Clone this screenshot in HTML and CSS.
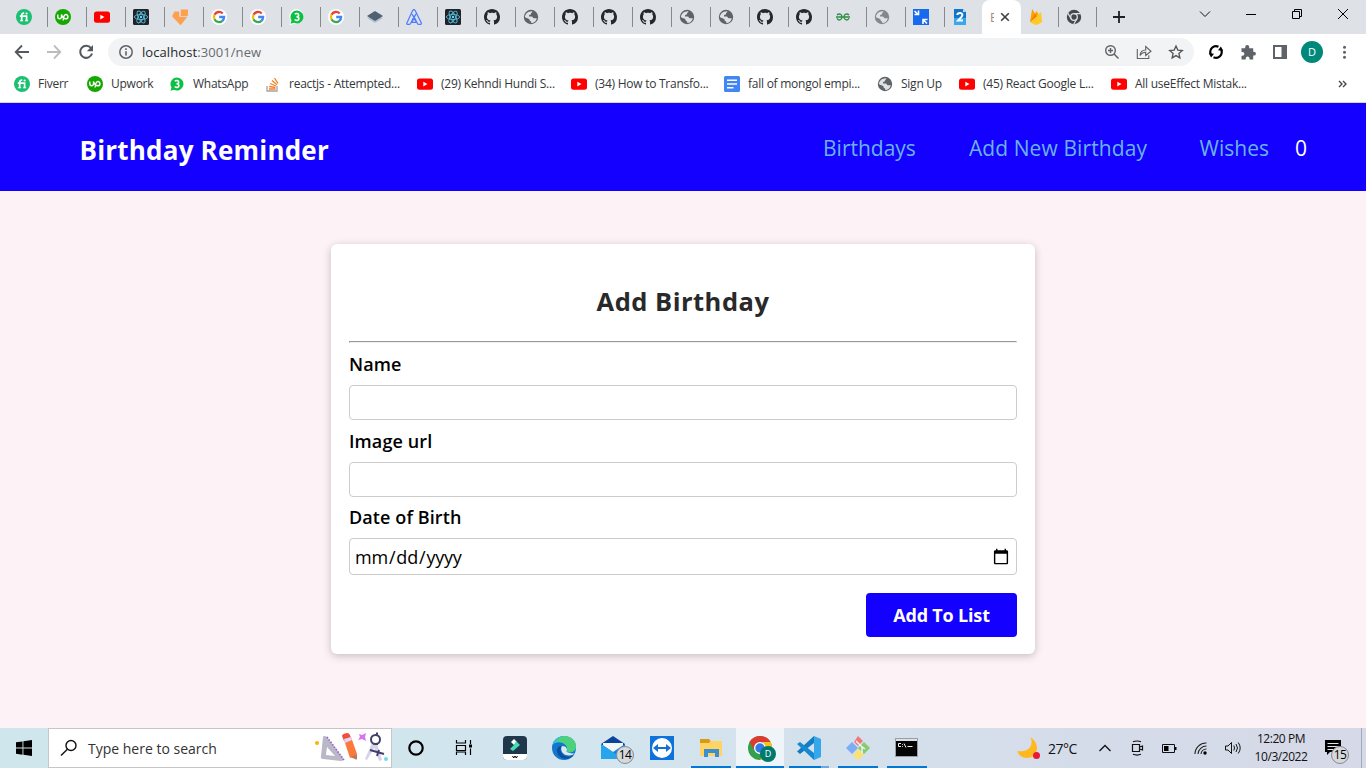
FILE: index.html
```html
<!DOCTYPE html>
<html lang="en">
<head>
<meta charset="utf-8">
<title>Birthday Reminder</title>
<link rel="stylesheet" href="styles.css">
</head>
<body>
<svg class="sprite" width="0" height="0">
  <symbol id="fiverr" viewBox="0 0 16 16"><circle cx="8" cy="8" r="8" fill="#1dbf73"/><path d="M3.800 7.100h6.800V12M5.700 12V6.300c0-1.600.8-2.300 2.500-2.200" fill="none" stroke="#fff" stroke-width="1.700"/><path d="M3.900 11.800h3.300M9 11.800h3.200" stroke="#fff" stroke-width="1"/><circle cx="10.600" cy="4.500" r="1.100" fill="#fff"/></symbol>
  <symbol id="upwork" viewBox="0 0 16 16"><circle cx="8" cy="8" r="8" fill="#14a800"/><path d="M2.800 5.500v2.300c0 2.600 3.700 2.600 3.700 0V5.500c.8 2.500 2.100 4.300 4.200 4.300 3 0 3-4.300.1-4.300-2 0-2.300 2.300-2.700 6" fill="none" stroke="#fff" stroke-width="1.400"/></symbol>
  <symbol id="youtube" viewBox="0 0 16 16"><rect y="2.500" width="16" height="11.300" rx="2.500" fill="#f00"/><path d="M6.300 5.800v4.600l4.200-2.300z" fill="#fff"/></symbol>
  <symbol id="react" viewBox="0 0 16 16"><rect width="16" height="16" rx="1.500" fill="#20232a"/><g fill="none" stroke="#53bdd6" stroke-width=".9"><ellipse cx="8" cy="8" rx="6.600" ry="2.600"/><ellipse cx="8" cy="8" rx="6.600" ry="2.600" transform="rotate(60 8 8)"/><ellipse cx="8" cy="8" rx="6.600" ry="2.600" transform="rotate(120 8 8)"/></g><circle cx="8" cy="8" r="1.200" fill="#61dafb"/></symbol>
  <symbol id="orange" viewBox="0 0 16 16"><path d="M2.500 2.500h4.800v5.300h8L9.500 15.300Q8.500 16.500 7.500 15.300L.7 8Q-.2 7.200.6 6.200z" fill="#fda14f"/><path d="M8.800.5H16V6q0 1-1 1H8.800z" fill="#fda14f"/></symbol>
  <symbol id="google" viewBox="0 0 16 16"><circle cx="8" cy="8" r="8" fill="#fff"/><g fill="none" stroke-width="2.300"><path d="M3.500 5.700A5.100 5.100 0 0 1 11.700 4.500" stroke="#ea4335"/><path d="M3.500 10.300a5.100 5.100 0 0 1 0-4.600" stroke="#fbbc05"/><path d="M11.400 11.800a5.100 5.100 0 0 1-7.900-1.500" stroke="#34a853"/><path d="M8.200 8h4.900a5.100 5.100 0 0 1-1.700 3.800" stroke="#4285f4"/></g></symbol>
  <symbol id="whatsapp" viewBox="0 0 16 16"><path d="M8.500 0A7.500 7.500 0 1 1 5.200 14.900L.4 16l1.200-4.500A7.500 7.500 0 0 1 8.500 0z" fill="#fff"/><path d="M8 1.500a6.500 6.500 0 1 1-3 12.300l-3.500.9 1-3.300A6.500 6.500 0 0 1 8 1.500z" fill="#0ac143"/><path d="M5.900 5.300C6.800 4 9.800 4.200 9.700 6.100 9.600 7.500 8.700 7.800 7.500 7.800c1.400 0 2.500.5 2.400 1.900-.1 2-3.100 2.100-4.200.8" fill="none" stroke="#fff" stroke-width="1.600"/></symbol>
  <symbol id="layers" viewBox="0 0 16 16"><path d="M0 9l8-3 8 3-8 5z" fill="#b6c0c8"/><path d="M0 7l8-5 8 5-8 5z" fill="#4e6273"/></symbol>
  <symbol id="aperture" viewBox="0 0 16 16"><path d="M.8 14.200L6.600 1.600q1.300-1.900 2.600 0L15.300 14q.4 1.300-.9 1.300h-1.700q-.9 0-1.300-.9L8 7.500 4.800 14.300q-.5 1-1.400 1H1.700q-1.300 0-.9-1.100zM6 5l4.200 8M10 4.800L6 13.300h5" fill="none" stroke="#4d7cfe" stroke-width="1.200"/></symbol>
  <symbol id="github" viewBox="0 0 16 16"><path d="M8 0C3.580 0 0 3.580 0 8c0 3.540 2.290 6.530 5.470 7.590.4.070.55-.17.55-.38 0-.19-.01-.82-.01-1.490-2.010.37-2.530-.49-2.690-.94-.09-.23-.48-.94-.82-1.130-.28-.15-.68-.52-.01-.53.63-.01 1.080.58 1.230.82.72 1.210 1.870.87 2.330.66.07-.52.28-.87.51-1.070-1.780-.2-3.640-.89-3.640-3.950 0-.87.31-1.590.82-2.150-.08-.2-.36-1.020.08-2.120 0 0 .67-.21 2.200.82.640-.18 1.320-.27 2-.27s1.360.09 2 .27c1.530-1.040 2.200-.82 2.200-.82.440 1.100.16 1.920.08 2.120.51.560.82 1.270.82 2.150 0 3.070-1.870 3.750-3.650 3.950.29.25.54.73.54 1.480 0 1.070-.01 1.930-.01 2.200 0 .21.15.46.55.38A8.010 8.010 0 0 0 16 8c0-4.420-3.580-8-8-8z" fill="#24292f"/></symbol>
  <symbol id="globe" viewBox="0 0 16 16"><circle cx="8" cy="8" r="7.200" fill="currentColor"/><path d="M9.200 2.200c.6 1-.7 1.300-1.200 2 .5 1-.8 1.600-1.900 1.800L6 7.600h2.700c1 0 1 1.700 2.200 1.700h2.900c-.5 3-3 4.800-5.600 4.700v-1.500c-1.200-.2-1.700-1-1.700-1.900 0-1-3.900-1.700-4.600-2.600C2 5 5 2 9.200 2.200z" fill="#dee1e6"/><path d="M10 4.500l3.200.1 1 3.400h-2.500L10 6.300z" fill="currentColor"/></symbol>
  <symbol id="gfg" viewBox="0 0 16 16"><path d="M2 6.200C3.800 4 7 5 7 8c0 3.300-3.800 4-5 1.300M14 6.200C12.200 4 9 5 9 8c0 3.300 3.800 4 5 1.300M1 8h14" fill="none" stroke="#2f8d46" stroke-width="1.300"/></symbol>
  <symbol id="resize" viewBox="0 0 16 16"><path d="M0 0h16v16H0z" fill="#1769ed"/><path d="M1.500 2l3 3M5.500 1.500v4h-4M14 14.500l-3.500-3.500M10 15v-4.500h4.500" fill="none" stroke="#fff" stroke-width="1.600"/></symbol>
  <symbol id="doctwo" viewBox="0 0 16 16"><path d="M2 0h9l3 3v13H2z" fill="#1176c9"/><path d="M2 9h12v7H2z" fill="#37a8ed"/><path d="M11 0v3h3z" fill="#bbdefb"/><path d="M5.300 6C5.600 3.500 10.500 3.300 10.400 6c0 1.800-2.300 3.300-4.300 5.400H11" fill="none" stroke="#fff" stroke-width="2"/></symbol>
  <symbol id="firebase" viewBox="0 0 16 16"><path d="M2 13L4 .8q.3-.8.8 0L7 4.700 8.300 2.500q.3-.5.700 0L14 13z" fill="#ffa000"/><path d="M2 13l10.300-9.500q.5-.4.700.3L14.200 13l-5.500 3q-.6.300-1.200 0z" fill="#ffca28"/><path d="M2 13L7 4.700l2 2.500z" fill="#f57c00"/></symbol>
  <symbol id="chromemono" viewBox="0 0 16 16"><circle cx="8" cy="8" r="7.200" fill="#45494d"/><circle cx="8" cy="8" r="3.300" fill="#45494d" stroke="#dee1e6" stroke-width="1.300"/><path d="M8 4.700h6.500M5.100 9.700L1.900 4.100M10.900 9.700l-3.200 5.500" stroke="#dee1e6" stroke-width="1.200"/></symbol>
  <symbol id="stack" viewBox="0 0 16 16"><path d="M2 10v5h10v-5" fill="none" stroke="#a0a4a8" stroke-width="1.300"/><path d="M4 13h6.500M4.100 10.500l6.300 1M5 7.500l6 2.500M7 4.500l5 4.200M9.500 2l3.500 5.300" stroke="#f48024" stroke-width="1.300"/></symbol>
  <symbol id="docs" viewBox="0 0 16 16"><rect width="16" height="16" rx="1.500" fill="#4285f4"/><path d="M3 4.300h10M3 8h10M3 11.800h6.500" stroke="#fff" stroke-width="1.600"/></symbol>
</svg>

<div class="tabstrip">
  <div class="tab"><svg><use href="#fiverr"/></svg></div>
  <div class="tab"><svg><use href="#upwork"/></svg></div>
  <div class="tab"><svg><use href="#youtube"/></svg></div>
  <div class="tab"><svg><use href="#react"/></svg></div>
  <div class="tab"><svg><use href="#orange"/></svg></div>
  <div class="tab"><svg><use href="#google"/></svg></div>
  <div class="tab"><svg><use href="#google"/></svg></div>
  <div class="tab"><svg><use href="#whatsapp"/></svg></div>
  <div class="tab"><svg><use href="#google"/></svg></div>
  <div class="tab"><svg><use href="#layers"/></svg></div>
  <div class="tab"><svg><use href="#aperture"/></svg></div>
  <div class="tab"><svg><use href="#react"/></svg></div>
  <div class="tab"><svg><use href="#github"/></svg></div>
  <div class="tab"><svg><use href="#globe"/></svg></div>
  <div class="tab"><svg><use href="#github"/></svg></div>
  <div class="tab"><svg><use href="#github"/></svg></div>
  <div class="tab"><svg><use href="#github"/></svg></div>
  <div class="tab"><svg><use href="#globe"/></svg></div>
  <div class="tab"><svg><use href="#globe"/></svg></div>
  <div class="tab"><svg><use href="#github"/></svg></div>
  <div class="tab"><svg><use href="#github"/></svg></div>
  <div class="tab"><svg><use href="#gfg"/></svg></div>
  <div class="tab muted"><svg><use href="#globe"/></svg></div>
  <div class="tab"><svg><use href="#resize"/></svg></div>
  <div class="tab plain"><svg><use href="#doctwo"/></svg></div>
  <div class="tab-active"><span class="tab-title">B</span><svg viewBox="0 0 10 10"><path d="M1.200 1.200l7.600 7.600M8.800 1.200L1.200 8.800" stroke="#3c4043" stroke-width="1.600"/></svg></div>
  <div class="tab short"><svg><use href="#firebase"/></svg></div>
  <div class="tab short"><svg><use href="#chromemono"/></svg></div>
  <svg class="new-tab" viewBox="0 0 12 12"><path d="M6 0v12M0 6h12" stroke="#202124" stroke-width="1.800"/></svg>
  <div class="window-controls">
    <svg viewBox="0 0 12 12"><path d="M1 3.500l5 5 5-5" fill="none" stroke="#111"/></svg>
    <svg viewBox="0 0 12 12"><path d="M1 6.500h10" stroke="#000"/></svg>
    <svg viewBox="0 0 12 12"><path d="M1.500 3.500h7v7h-7zM3.500 3.500v-2h7v7h-2" fill="none" stroke="#000"/></svg>
    <svg viewBox="0 0 12 12"><path d="M1 1l10 10M11 1L1 11" stroke="#000"/></svg>
  </div>
</div>

<div class="toolbar">
  <svg class="nav-icon" viewBox="0 0 16 16"><path d="M15 8H2M8 1.500L1.700 8 8 14.500" fill="none" stroke="#55595d" stroke-width="1.800"/></svg>
  <svg class="nav-icon" viewBox="0 0 16 16"><path d="M1 8h13M8 1.500L14.300 8 8 14.500" fill="none" stroke="#babcbe" stroke-width="1.800"/></svg>
  <svg class="nav-icon" viewBox="0 0 16 16"><path d="M13 4.200A6 6 0 1 0 14 9.500" fill="none" stroke="#55595d" stroke-width="2"/><path d="M15 1v6.200H8.800z" fill="#55595d"/></svg>
  <div class="omnibox">
    <svg class="info" viewBox="0 0 14 14"><circle cx="7" cy="7" r="6.200" fill="none" stroke="#5f6368" stroke-width="1.500"/><path d="M7 6.200v4.300M7 3.300v1.600" stroke="#5f6368" stroke-width="1.600"/></svg>
    <span class="url">localhost<span>:3001/new</span></span>
    <div class="omni-actions">
      <svg viewBox="0 0 16 16"><circle cx="6.500" cy="6.500" r="4.800" fill="none" stroke="#5f6368" stroke-width="1.400"/><path d="M10 10l4.500 4.500M6.500 4v5M4 6.500h5" stroke="#5f6368" stroke-width="1.500"/></svg>
      <svg viewBox="0 0 16 16"><path d="M1.300 5v9.500h11.500v-3.300M4 11.500C4.300 8 6.500 6 9.700 6V2.500L15 7.300l-5.300 4.200V8.300C7 8.300 5.300 9.500 4 11.500z" fill="none" stroke="#5f6368" stroke-width="1.100"/></svg>
      <svg viewBox="0 0 16 16"><path d="M8 2l1.800 4.100 4.500.4-3.400 3 1 4.400L8 11.600l-3.900 2.300 1-4.400-3.400-3 4.500-.4z" fill="none" stroke="#505458" stroke-width="1.300"/></svg>
    </div>
  </div>
  <div class="extensions">
    <svg viewBox="0 0 16 16"><path d="M10.500 2.800A5.700 5.700 0 0 0 2.800 10.200M5.500 13.200A5.700 5.700 0 0 0 13.200 5.800" fill="none" stroke="#000" stroke-width="2.200"/><path d="M.8 9.300l5.200.4-2.900 3.800zM15.200 6.700l-5.200-.4 2.900-3.800z"/></svg>
    <svg viewBox="0 0 16 16"><path d="M1.500 4.300h3.700V3a2 2 0 0 1 4 0v1.300h4v3.500h.8a1.900 1.900 0 0 1 0 3.800h-.8v3.900H9.500v-1a1.900 1.900 0 0 0-3.800 0v1H1.500v-3.800h1a1.900 1.900 0 0 0 0-3.800h-1z" fill="#5f6368"/></svg>
    <svg viewBox="0 0 16 16"><path d="M2 2h12v12H2z" fill="none" stroke="#5f6368" stroke-width="2"/><path d="M9.500 2H14v12H9.500z" fill="#5f6368"/></svg>
    <span class="avatar">D</span>
    <svg viewBox="0 0 16 16"><circle cx="8.500" cy="3.300" r="1.500" fill="#5f6368"/><circle cx="8.500" cy="8.300" r="1.500" fill="#5f6368"/><circle cx="8.500" cy="13.300" r="1.500" fill="#5f6368"/></svg>
  </div>
</div>

<div class="bookmarks">
  <a><svg><use href="#fiverr"/></svg>Fiverr</a>
  <a><svg><use href="#upwork"/></svg>Upwork</a>
  <a><svg><use href="#whatsapp"/></svg>WhatsApp</a>
  <a><svg><use href="#stack"/></svg>reactjs - Attempted...</a>
  <a><svg><use href="#youtube"/></svg>(29) Kehndi Hundi S...</a>
  <a><svg><use href="#youtube"/></svg>(34) How to Transfo...</a>
  <a><svg><use href="#docs"/></svg>fall of mongol empi...</a>
  <a><svg><use href="#globe"/></svg>Sign Up</a>
  <a><svg><use href="#youtube"/></svg>(45) React Google L...</a>
  <a><svg><use href="#youtube"/></svg>All useEffect Mistak...</a>
  <svg class="more" viewBox="0 0 10 8"><path d="M1 1l3 3-3 3M5 1l3 3-3 3" fill="none" stroke="#44474a" stroke-width="1.400"/></svg>
</div>

<header class="site-header">
  <h1>Birthday Reminder</h1>
  <nav>
    <a>Birthdays</a>
    <a>Add New Birthday</a>
    <a>Wishes</a>
    <span class="count">0</span>
  </nav>
</header>

<main class="page">
  <form class="card">
    <h2>Add Birthday</h2>
    <hr>
    <label for="name">Name</label>
    <input id="name" type="text">
    <label for="image">Image url</label>
    <input id="image" type="text">
    <label for="dob" class="dob-label">Date of Birth</label>
    <input id="dob" class="dob" type="date">
    <button type="button">Add To List</button>
  </form>
</main>

<footer class="taskbar">
  <div class="start"><svg viewBox="0 0 16 16"><path d="M0 2.300l6.500-.9v6.200H0zM7.400 1.200L16 0v7.600H7.400zM0 8.500h6.500v6.200L0 13.800zM7.400 8.500H16V16l-8.600-1.200z"/></svg></div>
  <div class="search">
    <svg class="lens" viewBox="0 0 18 18"><circle cx="11" cy="6.500" r="5" fill="none" stroke="#111" stroke-width="1.400"/><path d="M7.400 10.200L1 16.500" stroke="#111" stroke-width="1.400"/></svg>
    <span>Type here to search</span>
    <svg class="doodle" viewBox="0 0 74 34">
      <circle cx="2" cy="12" r="2" fill="#ffb400"/>
      <path d="M8 6Q9 4 12 6L28 27Q29 30 26 30L8 28Q5 28 6 25zM12 16l-1 8 9 1z" fill="#bab8c6" fill-rule="evenodd"/>
      <path d="M12 6l17 23" stroke="#9664d2" stroke-width="1.700" stroke-dasharray="1.500 1.500"/>
      <path d="M29 9l7-3 6 17-7 4z" fill="#fb793b"/><path d="M27 5q0-2 5-3 2 0 3 2l1 3-7 3z" fill="#f04e3e"/><path d="M29 8l7-2 1 3-7 3z" fill="#e1d7f4"/><path d="M35 26l7-3 0 5q-1 1-2 0z" fill="#c27854"/>
      <path d="M44 3l3 1 4-2-1 4 1 4-4-2-4 1 2-3z" fill="#d874f2"/>
      <path d="M57 12l4 2-9 15-2-1zM62 12l5 17-3 1-5-14z" fill="#d6d3ea"/>
      <circle cx="60.500" cy="8.500" r="4.500" fill="none" stroke="#41406b" stroke-width="2"/><path d="M62 1.500v3M59 13h4M55 19l14 4M64 19l-2 6" stroke="#41406b" stroke-width="2"/>
      <circle cx="71" cy="28" r="2" fill="#75dce5"/>
    </svg>
  </div>
  <div class="apps">
    <div class="app"><svg viewBox="0 0 24 24"><circle cx="12" cy="12" r="6.700" fill="none" stroke="#000" stroke-width="2.200"/></svg></div>
    <div class="app view"><svg viewBox="0 0 24 24"><path d="M4.500 4v3h9V4M4.500 19v-3h9v3M4.500 9.500h9v5h-9zM18.500 4v4M18.500 12.500V19" fill="none" stroke="#000" stroke-width="1.200"/><path d="M17 8.500h3v3h-3z"/></svg></div>
    <div class="app"><svg viewBox="0 0 24 24"><rect width="24" height="24" rx="4" fill="#20364a"/><path d="M0 18h24v2q0 4-4 4H4q-4 0-4-4z" fill="#fff"/><path d="M11 3l3 3-3 3-3-3z" fill="#fff"/><path d="M13 5l4 4-7 6-3-2 4-4z" fill="#43ddb5"/><path d="M9.500 20l1.200 2 1.300-2 1.300 2 1.200-2" fill="none" stroke="#000"/></svg></div>
    <div class="app"><svg viewBox="0 0 24 24"><circle cx="12" cy="12" r="12" fill="#1377cf"/><path d="M.4 9C1.800 3.500 7 0 12 0c8 0 12 5.500 12 10.500 0 5-5 6.500-8 5.500-3-.8-1-2 -1-4C15 6.500 5 4 .4 9z" fill="#35bfdc"/><path d="M12 0c8 0 12 5.500 12 10.500 0 4.500-4 6-7 5.700-3-.6-1-2-2-5C13.500 7 8 5.500 4 6 6 2 9 .3 12 0z" fill="#50d36c" opacity=".85"/><path d="M10 10c-3 3-1.500 9 4.500 10.500 3 .6 6-.2 8-2C18 25 7 24 5 16c-1-4 2-6.500 5-6z" fill="#0c4f9d"/><path d="M10 10c-2 3 0 8 4 9 3 1 6 .5 9-1.500-1.800.1-8.500-.5-8.500-2.500 1-1.500.5-5-4.500-5z" fill="#dceaf0"/></svg></div>
    <div class="app mail"><svg viewBox="0 0 24 24"><path d="M0 8L12 0l12 8v15H0z" fill="#09469a"/><path d="M2 7h20v9H2z" fill="#f4f6f7"/><path d="M0 8l12 8L24 8v15H0z" fill="#1287dc"/><path d="M0 8l22 15H0z" fill="#26a5ed"/></svg><span class="badge">14</span></div>
    <div class="app"><svg viewBox="0 0 24 24"><path d="M0 0h24v24H0z" fill="#0e72dc"/><circle cx="12" cy="12" r="10" fill="#fff"/><path d="M3 12l5-4v3h8V8l5 4-5 4v-3H8v3z" fill="#1670d4"/></svg></div>
    <div class="app open"><svg viewBox="0 0 24 24"><path d="M1 3h9l2 2h11v15H1z" fill="#ffd463"/><path d="M1 3h9l1.500 2-1.500 2H1z" fill="#d99b15"/><path d="M5 13h15v8h-4v-4H9v4H5z" fill="#3b8ed0"/></svg></div>
    <div class="app open current"><svg viewBox="0 0 26 26"><circle cx="12" cy="12" r="12" fill="#34a04b"/><path d="M1.600 6A12 12 0 0 1 22.400 6H12a6 6 0 0 0-5.200 9z" fill="#de3b30"/><path d="M22.400 6A12 12 0 0 1 12 24l5.200-9A6 6 0 0 0 12 6z" fill="#fbc116"/><circle cx="12" cy="12" r="6" fill="#fff"/><circle cx="12" cy="12" r="4.700" fill="#3579e6"/></svg><span class="profile">D</span></div>
    <div class="app open grouped"><svg viewBox="0 0 24 24"><path d="M17 0l7 3v18l-7 3z" fill="#35a8ed"/><path d="M17 0v7L3 18 0 15.500z" fill="#147cc2"/><path d="M0 8l3-2 14 11v7z" fill="#1689d1"/></svg></div>
    <div class="app open"><svg viewBox="0 0 24 24"><path d="M12 0l5 5-5 5-4-4z" fill="#f47578"/><path d="M6 6l6 6-6 6-6-6z" fill="#7cadf6"/><path d="M18 6l6 6-6 6-6-6z" fill="#88cb6d"/><path d="M12 13l6 6-6 5-5-5z" fill="#fbe174"/><path d="M10 5l6 6v6M15 10l4 3" fill="none" stroke="#eef4f7" stroke-width="1.500"/></svg></div>
    <div class="app open"><svg viewBox="0 0 24 24"><path d="M.5 2.500h22v18H.5z" fill="#050505" stroke="#9b9fa2"/><path d="M1 3h21v2H1z" fill="#dce1e5"/><path d="M6 7.500H3.500v3H6M7.500 8v.8M7.500 10v.8M9 7.500l2 4M12.500 10.500h5" fill="none" stroke="#eee"/></svg></div>
  </div>
  <div class="tray">
    <div class="weather"><svg viewBox="0 0 24 24"><path d="M13.500 1C24 8 21 22 10 22 5 22 1 19 .5 15 12 17 17 9 13.500 1z" fill="#ffb91f"/><circle cx="19.500" cy="19.500" r="3.500" fill="#e81939"/></svg><span>27°C</span></div>
    <div class="status">
      <svg viewBox="0 0 16 16"><path d="M2.500 11L8 5.500l5.500 5.500" fill="none" stroke="#111" stroke-width="1.300"/></svg>
      <svg viewBox="0 0 16 16"><path d="M3.500 4.500h7v7h-7zM10.500 7l3-1v4l-3-1M4 1.800Q8 .2 12 1.800M4 14.300q4 1.500 8 0" fill="none" stroke="#111" stroke-width="1.200"/></svg>
      <svg viewBox="0 0 16 16"><path d="M1.500 4.500h12v8h-12z" fill="none" stroke="#111"/><path d="M3 6h4.500v5H3zM14 7h1.500v3H14z"/></svg>
      <svg viewBox="0 0 16 16"><path d="M2 14A11 11 0 0 1 13.500 3M5 14a8.500 8.500 0 0 1 8.500-8M8 14a5.500 5.500 0 0 1 5.500-5" fill="none" stroke="#222" stroke-width="1.100"/><circle cx="12" cy="13" r="1.700"/></svg>
      <svg viewBox="0 0 16 16"><path d="M.5 6v4h2.500l3.500 3.500v-11L3 6zM8.800 5.500q1.500 2.500 0 5M11 4q3 4 0 8M13.200 2.500q4 5.500 0 11" fill="none" stroke="#111"/></svg>
    </div>
    <div class="clock"><span>12:20 PM</span><span>10/3/2022</span></div>
    <div class="actions"><svg viewBox="0 0 16 16"><path d="M0 0h16v12H5l-3 3v-3H0z"/><path d="M2.500 3.500h11M2.500 6.500h11M2.500 9.500h6" stroke="#dfe4ed"/></svg><span class="badge">15</span></div>
  </div>
</footer>
</body>
</html>
```
FILE: styles.css
```css
* { box-sizing: border-box; }
body {
  margin: 0;
  width: 1366px;
  height: 768px;
  overflow: hidden;
  display: flex;
  flex-direction: column;
  background: #fdf2f6;
  font-family: "Open Sans", "Noto Sans", sans-serif;
}
svg { display: block; flex: none; }
.sprite { position: absolute; }

/* Browser tabs */
.tabstrip {
  display: flex;
  height: 34px;
  padding-left: 9px;
  background: #dee1e6;
}
.tab {
  display: flex;
  align-items: center;
  width: 39px;
  height: 20px;
  margin-top: 7px;
  padding-left: 7px;
  border-right: 1px solid #86898d;
  color: #5f6368;
}
.tab svg, .bookmarks a svg { width: 16px; height: 16px; }
.tab.muted { color: #858789; }
.tab.plain { border-color: transparent; width: 37px; }
.tab.short { width: 38px; }
.tab-active {
  display: flex;
  align-items: center;
  gap: 6px;
  width: 39px;
  padding-left: 8px;
  border-radius: 8px 8px 0 0;
  background: #fff;
}
.tab-active svg { width: 10px; height: 10px; }
.tab-title {
  width: 4px;
  overflow: hidden;
  font-size: 12px;
  color: #a08d7c;
}
.new-tab { width: 12px; height: 12px; margin: 11px 0 0 16px; }
.window-controls { display: flex; gap: 34px; margin: 8px 0 0 auto; padding-right: 17px; }
.window-controls svg { width: 12px; height: 12px; }

/* Address bar */
.toolbar {
  display: flex;
  align-items: center;
  height: 36px;
  padding-left: 14px;
  background: #fff;
}
.nav-icon { width: 16px; height: 16px; margin-right: 16px; }
.omnibox {
  display: flex;
  align-items: center;
  width: 1086px;
  height: 28px;
  margin-left: -2px;
  padding: 0 10px 0 11px;
  border-radius: 14px;
  background: #f1f3f4;
}
.info { width: 14px; height: 14px; }
.url { margin-left: 9px; font-size: 13px; letter-spacing: .08px; color: #26282b; }
.url span { color: #686c70; }
.omni-actions { display: flex; gap: 16px; margin-left: auto; }
.omni-actions svg { width: 16px; height: 16px; }
.extensions { display: flex; align-items: center; gap: 16px; margin-left: 14px; }
.extensions svg { width: 16px; height: 16px; }
.avatar {
  width: 22px;
  height: 22px;
  margin: 0 -3px;
  border-radius: 50%;
  background: #00897b;
  color: #fff;
  font-size: 11px;
  line-height: 22px;
  text-align: center;
}

/* Bookmarks */
.bookmarks {
  display: grid;
  grid-template-columns: 73px 82px 96px 152px 154px 153px 153px 82px 152px 227px 10px;
  align-items: center;
  height: 33px;
  padding: 0 0 5px 14px;
  border-bottom: 1px solid #d4d7db;
  background: #fff;
  color: #34373a;
  font-size: 12px;
  white-space: nowrap;
}
.bookmarks a { display: flex; align-items: center; gap: 8px; letter-spacing: -.25px; color: #34373a; }
.bookmarks a svg { color: #5f6368; }
.more { width: 10px; height: 8px; }

/* Site header */
.site-header {
  display: flex;
  align-items: center;
  justify-content: space-between;
  height: 88px;
  padding: 0 59px 0 79.5px;
  background: #1400ff;
}
.site-header h1 { margin: 6px 0 0; font-size: 26px; line-height: 36px; letter-spacing: .2px; color: #fff; }
.site-header nav { display: flex; margin-top: 2px; font-size: 21px; line-height: 30px; color: #69b3ec; }
.site-header nav a { margin-right: 52.500px; }
.site-header nav a:nth-child(1) { margin-right: 53px; }
.site-header nav a:nth-child(2) { letter-spacing: .1px; }
.site-header nav a:nth-child(3) { margin-right: 26px; }
.count { color: #fff; }

/* Form */
.page { flex: 1; padding-top: 53px; }
.card {
  display: flex;
  flex-direction: column;
  width: 704px;
  height: 410px;
  margin: 0 auto;
  padding: 18px 18px 17px;
  border-radius: 6px;
  background: #fff;
  box-shadow: 0 2px 8px rgba(0, 0, 0, .22);
}
.card h2 { margin: 0; font-size: 25.5px; line-height: 79px; text-align: center; color: #292929; letter-spacing: .5px; }
.card hr { width: 100%; height: 2px; margin: 0; }
.card label { font-size: 18px; font-weight: 600; line-height: 42px; letter-spacing: .1px; color: #000; }
.card .dob-label { line-height: 41px; }
.card input {
  height: 35px;
  padding: 4px;
  border: 1px solid #ccc;
  border-radius: 4px;
  background: #fff;
  font: 18px "Open Sans", sans-serif;
}
.card .dob { height: 37px; letter-spacing: -.2px; }
.card button {
  align-self: flex-end;
  width: 151px;
  height: 44px;
  margin-top: 18px;
  border: 0;
  border-radius: 4px;
  background: #1400ff;
  color: #fff;
  font: 700 18px "Open Sans", sans-serif;
  letter-spacing: -.18px;
}

/* Taskbar */
.taskbar {
  display: flex;
  height: 40px;
  background: linear-gradient(90deg, #cfe6ed, #d3e5ee 45%, #d5dce9 80%, #d6d9e7);
}
.start { width: 48px; padding: 12px 16px; }
.start svg { width: 16px; height: 16px; }
.search {
  display: flex;
  align-items: center;
  width: 344px;
  border: 1px solid #c6c6c6;
  background: #fff;
  font-size: 14px;
  color: #333;
}
.lens { width: 18px; height: 18px; margin: 0 10px 0 11px; }
.doodle { width: 74px; height: 34px; margin-left: auto; margin-right: 2px; }
.apps { display: flex; gap: 1px; }
.app {
  position: relative;
  display: flex;
  align-items: center;
  justify-content: center;
  width: 48px;
}
.app svg { width: 24px; height: 24px; }
.view { margin: 0 2px 0 -1px; }
.open::after {
  content: "";
  position: absolute;
  inset: auto 4px 0;
  height: 2px;
  background: #0078d7;
}
.current { background: #eff4f8; }
.current svg { width: 26px; height: 26px; margin: 2px 0 0 2px; }
.current::after { inset: auto 0 0; }
.grouped::after { background: linear-gradient(90deg, #0078d7 80%, #68abe4 80%); }
.badge, .profile {
  position: absolute;
  width: 18px;
  height: 18px;
  border-radius: 50%;
  text-align: center;
}
.badge {
  left: 27px;
  top: 18px;
  border: 1px solid #858b90;
  background: #d5d9dc;
  font-size: 12px;
  line-height: 16px;
  letter-spacing: -.5px;
  color: #000;
}
.profile { left: 24px; top: 18px; width: 16px; height: 16px; background: #00796d; color: #fff; font-size: 9px; line-height: 16px; }
.tray { display: flex; flex: 1; align-items: center; justify-content: flex-end; color: #111; }
.weather { display: flex; align-items: center; gap: 7px; width: 80px; font-size: 14px; letter-spacing: -.5px; }
.weather svg { width: 24px; height: 24px; }
.status { display: flex; gap: 16px; }
.status svg { width: 16px; height: 16px; }
.clock {
  display: flex;
  flex-direction: column;
  width: 80px;
  font-size: 12px;
  line-height: 18px;
  letter-spacing: -.45px;
  text-align: center;
}
.actions { position: relative; width: 41px; height: 40px; margin-right: 4px; padding: 12px 0 0 4px; border-right: 1px solid #a5aab4; }
.actions svg { width: 16px; height: 16px; }
.actions .badge { left: 10px; }
```
